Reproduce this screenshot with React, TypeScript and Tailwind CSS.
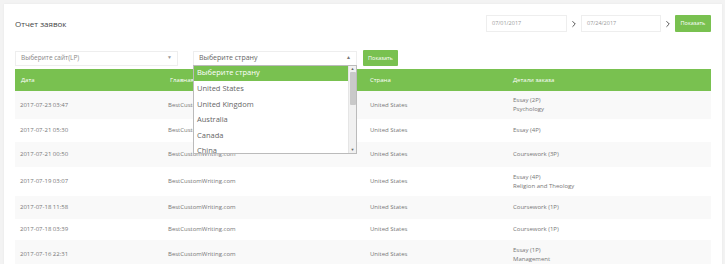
import { ChevronRight } from "lucide-react";

type Row = { date: string; site: string; country: string; details: string[]; h: string };

const rows: Row[] = [
  { date: "2017-07-23 03:47", site: "BestCustomWriting.com", country: "United States", details: ["Essay (2P)", "Psychology"], h: "h-[28px]" },
  { date: "2017-07-21 05:30", site: "BestCustomWriting.com", country: "United States", details: ["Essay (4P)"], h: "h-[23px]" },
  { date: "2017-07-21 00:50", site: "BestCustomWriting.com", country: "United States", details: ["Coursework (3P)"], h: "h-[25px]" },
  { date: "2017-07-19 03:07", site: "BestCustomWriting.com", country: "United States", details: ["Essay (4P)", "Religion and Theology"], h: "h-[29px]" },
  { date: "2017-07-18 11:58", site: "BestCustomWriting.com", country: "United States", details: ["Coursework (1P)"], h: "h-[23px]" },
  { date: "2017-07-18 03:39", site: "BestCustomWriting.com", country: "United States", details: ["Coursework (1P)"], h: "h-[21px]" },
  { date: "2017-07-16 22:31", site: "BestCustomWriting.com", country: "United States", details: ["Essay (1P)", "Management"], h: "h-[29px]" },
];

const countries = ["United States", "United Kingdom", "Australia", "Canada", "China"];

export default function App() {
  return (
    <div className="w-[725px] h-[264px] overflow-hidden bg-[#f3f3f3] pt-[4px] pl-[4px] font-['Open_Sans',sans-serif]">
      <div className="w-[718px] h-[300px] bg-white px-[11px] pt-[11px] shadow-[0_0_2px_rgba(0,0,0,0.06)]">
        {/* top bar */}
        <div className="flex items-center h-[17px]">
          <h1 className="text-[8px] text-[#444]">Отчет заявок</h1>
          <div className="ml-auto flex items-center">
            <div className="w-[81px] h-[17px] border border-[#eee] flex items-center pl-[5px] text-[5.5px] text-[#999]">07/01/2017</div>
            <ChevronRight size={10} strokeWidth={2.2} className="mx-[2px] text-[#444]" />
            <div className="w-[80px] h-[17px] border border-[#eee] flex items-center pl-[5px] text-[5.5px] text-[#999]">07/24/2017</div>
            <ChevronRight size={10} strokeWidth={2.2} className="mx-[2px] text-[#444]" />
            <button className="w-[36px] h-[17px] bg-[#79c150] text-white text-[5.5px] rounded-[1px]">Показать</button>
          </div>
        </div>

        {/* filters */}
        <div className="flex items-center mt-[18px] h-[16px]">
          <div className="w-[163px] h-[15px] border border-[#eee] flex items-center justify-between px-[5px] text-[6.5px] text-[#888]">
            <span>Выберите сайт(LP)</span>
            <span className="text-[5px] text-[#999]">▼</span>
          </div>
          <div className="relative ml-[15px]">
            <div className="w-[164px] h-[15px] border border-[#eee] flex items-center justify-between px-[5px] text-[7px] text-[#666]">
              <span>Выберите страну</span>
              <span className="text-[5px] text-[#777]">▲</span>
            </div>
            <div className="absolute left-0 top-[14px] z-10 w-[164px] h-[89px] bg-white border border-[#bbb] flex overflow-hidden">
              <div className="flex-1 flex flex-col text-[7.5px] text-[#666]">
                <div className="h-[15px] shrink-0 bg-[#79c150] text-white flex items-center pl-[3px]">Выберите страну</div>
                {countries.map((c) => (
                  <div key={c} className="h-[15.5px] pt-[1px] flex items-center pl-[3px] shrink-0">{c}</div>
                ))}
              </div>
              <div className="w-[8px] bg-[#f1f1f1] flex flex-col items-center border-l border-[#e5e5e5]">
                <span className="text-[4px] text-[#666] leading-[6px]">▲</span>
                <div className="w-[6px] h-[33px] bg-[#c9c9c9] rounded-[1px]" />
                <span className="mt-auto text-[4px] text-[#666] leading-[6px]">▼</span>
              </div>
            </div>
          </div>
          <button className="ml-[6px] w-[35px] h-[16px] bg-[#79c150] text-white text-[5.5px] rounded-[1px]">Показать</button>
        </div>

        {/* table */}
        <table className="mt-[3px] w-[696px] table-fixed border-collapse text-[6px] text-[#777]">
          <colgroup>
            <col className="w-[149px]" />
            <col className="w-[200px]" />
            <col className="w-[145px]" />
            <col className="w-[202px]" />
          </colgroup>
          <thead>
            <tr className="bg-[#79c150] text-white h-[22px]">
              <th className="text-left font-normal pl-[6px]">Дата</th>
              <th className="text-left font-normal pl-[6px]">Главная</th>
              <th className="text-left font-normal pl-[6px]">Страна</th>
              <th className="text-left font-normal pl-[4px]">Детали заказа</th>
            </tr>
          </thead>
          <tbody>
            {rows.map((r, i) => (
              <tr key={i} className={`${r.h} ${i % 2 === 0 ? "bg-[#f9f9f9]" : "bg-white"}`}>
                <td className="pl-[5px]">{r.date}</td>
                <td className="pl-[4px]">{r.site}</td>
                <td className="pl-[6px]">{r.country}</td>
                <td className="pl-[4px] leading-[9px]">
                  {r.details.map((d) => (
                    <div key={d}>{d}</div>
                  ))}
                </td>
              </tr>
            ))}
          </tbody>
        </table>
      </div>
    </div>
  );
}
